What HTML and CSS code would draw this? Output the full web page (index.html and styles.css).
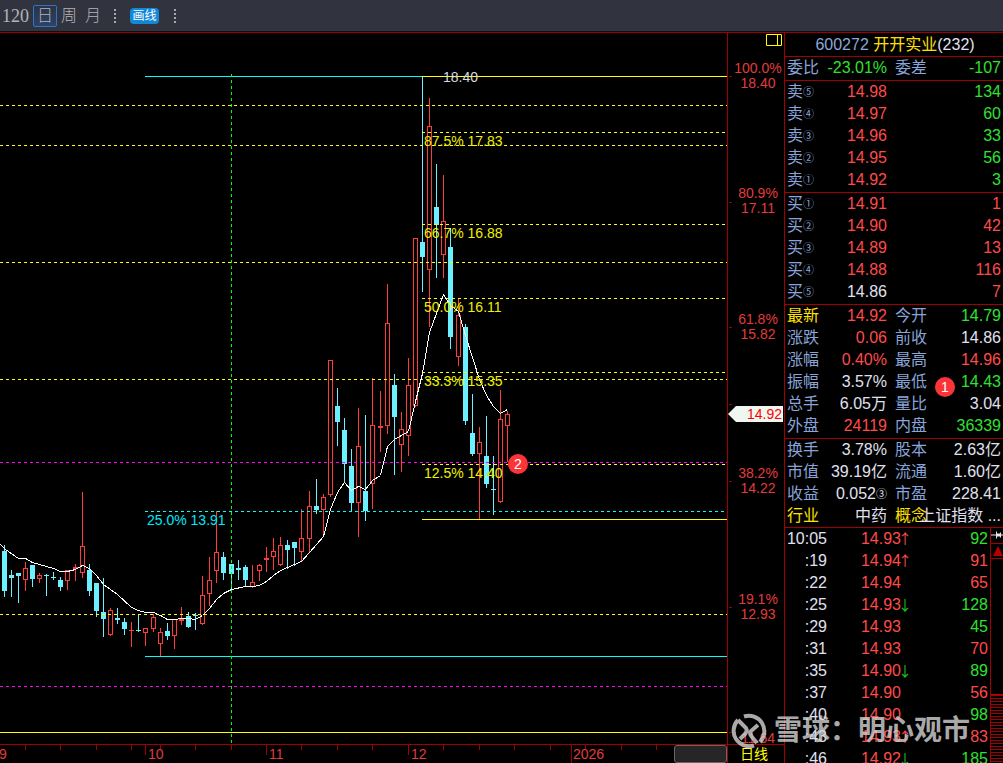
FILE: index.html
```html
<!DOCTYPE html>
<html lang="zh-CN">
<head>
<meta charset="utf-8">
<title>开开实业 600272</title>
<link rel="stylesheet" href="styles.css">
</head>
<body>
<header class="toolbar">
  <button class="period period-num">120</button>
  <button class="period active">日</button>
  <button class="period">周</button>
  <button class="period">月</button>
  <span class="grip"></span>
  <button class="draw">画线</button>
  <span class="grip"></span>
</header>
<main class="workspace">
  <section class="chart">
    <svg class="plot" id="plot" aria-label="日线图">
      <g class="crisp" transform="translate(0.5 0.5)">
        <g id="candles"></g>
        <g class="yellow dashed">
          <line x1="-1" y1="73" x2="100%" y2="73"/>
          <line x1="-1" y1="113" x2="100%" y2="113"/>
          <line x1="-1" y1="230" x2="100%" y2="230"/>
          <line x1="-1" y1="347" x2="100%" y2="347"/>
          <line x1="-1" y1="582" x2="100%" y2="582"/>
          <line x1="421" y1="100" x2="100%" y2="100"/>
          <line x1="421" y1="192" x2="100%" y2="192"/>
          <line x1="421" y1="266" x2="100%" y2="266"/>
          <line x1="421" y1="340" x2="100%" y2="340"/>
          <line x1="421" y1="432" x2="100%" y2="432"/>
        </g>
        <g class="magenta dashed">
          <line x1="-1" y1="430" x2="100%" y2="430"/>
          <line x1="-1" y1="654" x2="100%" y2="654"/>
        </g>
        <g class="cyan">
          <line class="dashed" x1="144" y1="479" x2="100%" y2="479"/>
          <line x1="144" y1="44" x2="422" y2="44"/>
          <line x1="144" y1="624" x2="100%" y2="624"/>
        </g>
        <g class="yellow">
          <line x1="421" y1="44" x2="100%" y2="44"/>
          <line x1="421" y1="487" x2="100%" y2="487"/>
          <line x1="-1" y1="700" x2="100%" y2="700"/>
        </g>
        <line class="green dashed" x1="231" y1="41" x2="231" y2="711"/>
        <polyline class="average" id="average"/>
      </g>
      <g class="fib">
        <text x="424" y="114">87.5% 17.83</text>
        <text x="424" y="206">66.7% 16.88</text>
        <text x="424" y="280">50.0% 16.11</text>
        <text x="424" y="354">33.3% 15.35</text>
        <text x="424" y="446">12.5% 14.40</text>
      </g>
      <text class="fib-cyan" x="147" y="493">25.0% 13.91</text>
      <text class="peak" x="443" y="50">18.40</text>
      <circle class="badge-dot" cx="518" cy="432" r="10"/>
      <text class="badge-num" x="518" y="437">2</text>
    </svg>
    <div class="timeline">
      <svg class="ticks" aria-label="时间轴">
        <g class="crisp" id="ticks" transform="translate(0.5 0)"></g>
        <g class="axis-text">
          <text x="-1" y="14">9</text>
          <text x="148" y="14">10</text>
          <text x="269" y="14">11</text>
          <text x="411" y="14">12</text>
          <text x="573" y="14">2026</text>
        </g>
      </svg>
      <span class="thumb"></span>
    </div>
  </section>
  <section class="scale">
    <svg class="scale-plot" aria-label="价格轴">
      <g class="crisp red-line" transform="translate(0.5 0.5)">
        <line x1="0" y1="44" x2="3" y2="44"/>
        <line x1="0" y1="170" x2="3" y2="170"/>
        <line x1="0" y1="295" x2="3" y2="295"/>
        <line x1="0" y1="372" x2="3" y2="372"/>
        <line x1="0" y1="449" x2="3" y2="449"/>
        <line x1="0" y1="575" x2="3" y2="575"/>
        <line x1="0" y1="700" x2="3" y2="700"/>
      </g>
      <path class="layout-icon" d="M38.500 2.500h15v11h-15zM49.500 2.500v11"/>
      <g class="axis-text mid">
        <text x="30" y="41">100.0%</text><text x="30" y="56">18.40</text>
        <text x="30" y="166">80.9%</text><text x="30" y="181">17.11</text>
        <text x="30" y="292">61.8%</text><text x="30" y="307">15.82</text>
        <text x="30" y="446">38.2%</text><text x="30" y="461">14.22</text>
        <text x="30" y="572">19.1%</text><text x="30" y="587">12.93</text>
        <text x="30" y="711">11.64</text>
      </g>
      <path class="tag" d="M0 382L8 374H55V390H8z"/>
      <text class="tag-text" x="54" y="387">14.92</text>
    </svg>
    <div class="mode">日线</div>
  </section>
  <aside class="panel">
    <h1 class="title"><span class="code">600272</span> <span class="name">开开实业</span>(232)</h1>
    <table class="quotes">
      <tr><th>委比</th><td class="dn">-23.01%</td><th>委差</th><td class="dn">-107</td></tr>
    </table>
    <table class="quotes book">
      <tr><th>卖<i>⑤</i></th><td class="up">14.98</td><th></th><td class="dn">134</td></tr>
      <tr><th>卖<i>④</i></th><td class="up">14.97</td><th></th><td class="dn">60</td></tr>
      <tr><th>卖<i>③</i></th><td class="up">14.96</td><th></th><td class="dn">33</td></tr>
      <tr><th>卖<i>②</i></th><td class="up">14.95</td><th></th><td class="dn">56</td></tr>
      <tr><th>卖<i>①</i></th><td class="up">14.92</td><th></th><td class="dn">3</td></tr>
    </table>
    <table class="quotes book">
      <tr><th>买<i>①</i></th><td class="up">14.91</td><th></th><td class="up">1</td></tr>
      <tr><th>买<i>②</i></th><td class="up">14.90</td><th></th><td class="up">42</td></tr>
      <tr><th>买<i>③</i></th><td class="up">14.89</td><th></th><td class="up">13</td></tr>
      <tr><th>买<i>④</i></th><td class="up">14.88</td><th></th><td class="up">116</td></tr>
      <tr><th>买<i>⑤</i></th><td>14.86</td><th></th><td class="up">7</td></tr>
    </table>
    <table class="quotes book">
      <tr><th class="hot">最新</th><td class="up">14.92</td><th>今开</th><td class="dn">14.79</td></tr>
      <tr><th>涨跌</th><td class="up">0.06</td><th>前收</th><td>14.86</td></tr>
      <tr><th>涨幅</th><td class="up">0.40%</td><th>最高</th><td class="up">14.96</td></tr>
      <tr><th>振幅</th><td>3.57%</td><th class="marked">最低<b class="mark">1</b></th><td class="dn">14.43</td></tr>
      <tr><th>总手</th><td>6.05万</td><th>量比</th><td>3.04</td></tr>
      <tr><th>外盘</th><td class="up">24119</td><th>内盘</th><td class="dn">36339</td></tr>
    </table>
    <table class="quotes">
      <tr><th>换手</th><td>3.78%</td><th>股本</th><td>2.63亿</td></tr>
      <tr><th>市值</th><td>39.19亿</td><th>流通</th><td>1.60亿</td></tr>
      <tr><th>收益</th><td>0.052<i>③</i></td><th>市盈</th><td>228.41</td></tr>
      <tr><th class="hot">行业</th><td>中药</td><th class="hot">概念</th><td><div class="spill">上证指数 ...</div></td></tr>
    </table>
    <div class="trades">
      <div class="trades-view">
        <table class="ticker">
          <tr><td>10:05</td><td class="up">14.93<s class="u">↑</s></td><td class="dn">92</td></tr>
          <tr><td>:19</td><td class="up">14.94<s class="u">↑</s></td><td class="up">91</td></tr>
          <tr><td>:22</td><td class="up">14.94<s></s></td><td class="up">65</td></tr>
          <tr><td>:25</td><td class="up">14.93<s class="d">↓</s></td><td class="dn">128</td></tr>
          <tr><td>:29</td><td class="up">14.93<s></s></td><td class="dn">45</td></tr>
          <tr><td>:31</td><td class="up">14.93<s></s></td><td class="up">70</td></tr>
          <tr><td>:35</td><td class="up">14.90<s class="d">↓</s></td><td class="dn">89</td></tr>
          <tr><td>:37</td><td class="up">14.90<s></s></td><td class="up">56</td></tr>
          <tr><td>:40</td><td class="up">14.90<s></s></td><td class="dn">98</td></tr>
          <tr><td>:43</td><td class="up">14.93<s class="u">↑</s></td><td class="up">83</td></tr>
          <tr><td>:46</td><td class="up">14.92<s class="d">↓</s></td><td class="dn">185</td></tr>
        </table>
      </div>
      <div class="scrollbar">
        <svg class="pin" viewBox="0 0 12 14"><path d="M0 6h5v1H0zM5 3h1v7H5zM6 5h3v3H6zM9 4h1v5H9zM10 6h2v1h-2z"/></svg>
        <button class="scroll-up" aria-label="向上滚动"><svg viewBox="0 0 12 14" width="12" height="14"><path d="M7 2l5 10H2z"/></svg></button>
        <div class="scroll-thumb"></div>
      </div>
    </div>
  </aside>
  <div class="watermark">
    <svg viewBox="0 0 36 36" width="36" height="36">
      <path d="M13 3.500A15.500 15.500 0 0 1 29 29M23 32.500A15.500 15.500 0 0 1 7 7"/>
      <path d="M7 7L15 15Q17 18 14 21L9 26M27 12L20 18Q18 21 21 24L26 30"/>
    </svg>
    <span>雪球：明心观市</span>
  </div>
</main>
<script src="chart.js"></script>
</body>
</html>
```
FILE: styles.css
```css
* { box-sizing: border-box; }
body {
  margin: 0;
  height: 100vh;
  display: flex;
  flex-direction: column;
  overflow: hidden;
  background: #000;
  color: #e0e0f0;
  font-family: "Liberation Sans", "Noto Sans CJK SC", sans-serif;
  font-size: 16px;
}
button {
  margin: 0;
  padding: 0;
  border: 0;
  background: none;
  color: inherit;
  font: inherit;
}
.toolbar {
  flex: none;
  display: flex;
  align-items: center;
  height: 32px;
  padding-left: 2px;
  background: #31343f;
  border-bottom: 1px solid #101014;
  color: #b4b4b8;
}
.period {
  width: 24px;
  height: 22px;
  line-height: 20px;
  font-family: "Liberation Serif", "Noto Sans CJK SC", serif;
  font-weight: 300;
}
.period-num { width: 31px; font-size: 18px; text-align: left; }
.active {
  border: 1px solid #2f74c8;
  border-radius: 2px;
  background: linear-gradient(#2b3345, #2c4368);
}
.grip {
  width: 2px;
  height: 14px;
  margin: 0 14px 0 9px;
  background: repeating-linear-gradient(#a8a8ac 0 2px, transparent 2px 4px);
}
.draw {
  width: 29px;
  height: 16px;
  border-radius: 4px;
  background: #1488d8;
  color: #fff;
  font-size: 12px;
  line-height: 16px;
}
.draw + .grip { margin-left: 15px; }

.workspace {
  position: relative;
  flex: 1;
  display: flex;
  min-height: 0;
  border-top: 1px solid #a00000;
}
.chart { flex: 1; min-width: 0; display: flex; flex-direction: column; }
.plot { display: block; flex: 1; width: 100%; min-height: 0; margin-top: -1px; }
.crisp { shape-rendering: crispEdges; fill: none; }
.dashed { stroke-dasharray: 3 3; }
.yellow { stroke: #ff0; }
.magenta { stroke: #f0f; }
.cyan { stroke: #0ff; }
.green { stroke: #0f0; }
.average { stroke: #fff; }
.rise { stroke: #ff3c3c; fill: none; }
.fall { stroke: #6cf0ff; fill: #6cf0ff; }
.plot text { font-size: 14px; }
.fib { fill: #f0f000; }
.fib-cyan { fill: #00e8f8; }
.peak { fill: #d8d8e4; }
.badge-num { fill: #fff; text-anchor: middle; }
.badge-dot { fill: #fc3438; }
.timeline {
  position: relative;
  flex: none;
  height: 19px;
  border-top: 1px solid #a00000;
}
.ticks { display: block; width: 100%; height: 18px; }
.ticks line, .red-line { stroke: #a00000; }
.axis-text { fill: #e03c3c; font-size: 14px; }
.mid { text-anchor: middle; }
.thumb {
  position: absolute;
  right: 0;
  top: 0;
  width: 53px;
  height: 18px;
  border: 1px solid #666;
  border-radius: 3px;
  background: #262626;
}
.scale {
  flex: none;
  width: 57px;
  display: flex;
  flex-direction: column;
  border-left: 1px solid #a00000;
}
.scale-plot { display: block; flex: 1; width: 100%; min-height: 0; margin-top: -1px; }
.layout-icon { fill: none; stroke: #ff0; }
.tag { fill: #f0f6f0; }
.tag-text { fill: #f00; font-size: 14px; text-anchor: end; }
.mode {
  flex: none;
  height: 19px;
  padding-left: 12px;
  border-top: 1px solid #a00000;
  color: #ff0;
  font-size: 14px;
  line-height: 18px;
}

.panel {
  flex: none;
  width: 219px;
  display: flex;
  flex-direction: column;
  border-left: 1px solid #a00000;
}
.title {
  flex: none;
  height: 24px;
  margin: 0;
  padding-left: 2px;
  border-bottom: 1px solid #a00000;
  font-size: 16px;
  font-weight: 400;
  line-height: 23px;
  text-align: center;
}
.code { color: #8aa8dc; }
.name, .quotes .hot { color: #ffe000; }
.quotes {
  flex: none;
  display: block;
  border-spacing: 0;
  border-bottom: 1px solid #a00000;
  padding: 0 2px;
}
.quotes tbody { display: block; }
.quotes tr {
  display: grid;
  grid-template-columns: 36px 64px 40px minmax(0, 1fr);
  height: 22px;
  line-height: 22px;
  white-space: nowrap;
}
.title + .quotes, .book { padding-bottom: 1px; }
th, td { padding: 0; font-weight: 400; }
th { color: #88a4d8; text-align: left; }
td { text-align: right; }
th + td + th { padding-left: 8px; }
.quotes i { font-size: 11px; font-style: normal; vertical-align: 1px; line-height: 1; }
.up { color: #ff4a4a; }
.dn { color: #30e030; }
.spill { display: flex; justify-content: flex-end; white-space: pre; }
.marked { position: relative; }
.mark {
  position: absolute;
  left: 48px;
  top: 6px;
  width: 20px;
  height: 20px;
  border-radius: 50%;
  background: #fc3438;
  color: #fff;
  font-size: 14px;
  font-weight: 400;
  line-height: 20px;
  text-align: center;
}
.trades { flex: 1; min-height: 0; display: flex; }
.trades-view { flex: 1; overflow: hidden; }
.ticker { width: 100%; border-spacing: 0; table-layout: fixed; }
.ticker td { height: 22px; line-height: 22px; white-space: nowrap; }
.ticker td:first-child { width: 42px; }
.ticker td:last-child { padding-right: 2px; }
.ticker td:nth-child(2) { width: 82px; }
.ticker s {
  display: inline-flex;
  justify-content: center;
  width: 8px;
  font-family: "Noto Sans CJK SC", sans-serif;
  font-size: 14px;
  line-height: 1;
  text-decoration: none;
}
.u { color: #ff4a4a; }
.d { color: #20c020; }
.scrollbar {
  flex: none;
  width: 13px;
  display: flex;
  flex-direction: column;
  border-left: 1px solid #a00000;
}
.pin { flex: none; width: 12px; height: 15px; fill: #e8e8e8; }
.scroll-up {
  flex: none;
  height: 16px;
  border: solid #a00000;
  border-width: 1px 0;
}
.scroll-up svg { display: block; fill: #b00000; }
.scroll-thumb {
  margin-top: auto;
  height: 69px;
  background: repeating-linear-gradient(#a00000 0 1px, #000 1px 3px);
  border-top: 1px solid #c00000;
}
.watermark {
  position: absolute;
  right: 33px;
  bottom: 14px;
  display: flex;
  align-items: center;
  gap: 7px;
  color: #d4d4d4;
  opacity: .8;
  font-size: 28px;
  font-weight: 700;
  line-height: 36px;
}
.watermark svg { fill: none; stroke: #d4d4d4; stroke-width: 4; }
```
FILE: chart.js
```js
const SVG = "http://www.w3.org/2000/svg";

// Plot rows: kind, x, high, low, body top, body bottom. TOP is the plot's first row.
const TOP = 32;
const candles = `
c 4 544 595 551 590
c 11 569 595 575 577
c 18 572 601 573 575
r 25 561 589 568 579
c 32 564 585 565 578
r 39 572 581 575 578
c 46 573 594 575 575
c 53 571 578 577 577
c 60 576 589 580 586
r 67 570 588 570 580
r 75 563 579 567 568
r 82 491 576 546 572
c 89 563 594 570 590
c 96 582 615 583 610
c 103 577 635 612 618
r 110 607 634 610 634
c 117 607 622 618 619
c 124 617 633 622 628
r 131 621 645 630 630
c 138 613 630 630 630
r 145 627 644 628 632
r 153 613 630 617 628
r 160 627 655 632 643
c 167 622 638 631 635
r 174 619 647 619 635
r 181 606 623 619 620
c 188 611 626 616 626
c 195 612 628 615 615
r 202 575 623 595 623
r 209 556 604 580 593
r 216 510 581 552 570
c 223 551 578 557 572
c 231 564 589 564 573
c 238 559 578 568 569
c 245 564 584 567 579
r 252 564 586 582 586
r 259 563 579 565 570
r 266 546 570 558 559
r 273 537 568 551 556
r 280 536 564 545 564
c 287 539 567 545 549
c 294 542 564 542 547
r 301 508 560 538 551
r 309 490 550 506 538
c 316 478 512 506 509
r 323 493 535 497 509
r 330 360 495 360 494
c 337 387 444 406 421
c 344 417 481 430 463
c 351 448 509 466 502
r 358 407 535 446 502
c 365 414 519 491 510
r 372 377 507 425 483
r 380 390 450 426 427
r 387 283 432 323 425
c 394 373 473 385 416
r 401 411 470 429 444
r 408 357 454 385 435
r 415 238 405 238 405
c 422 76 290 242 256
r 429 97 325 126 269
c 436 163 276 207 224
r 443 174 276 221 254
c 450 227 347 247 336
r 458 298 364 315 356
c 465 323 423 327 420
c 472 393 454 433 453
r 479 426 518 442 453
c 486 415 486 456 483
c 493 455 513 489 489
r 500 389 501 419 501
r 507 410 460 414 425`;

const average = `0,544 5,549 18,558 25,558 32,562 46,566 53,568 60,571 67,571 75,569
82,565 89,568 96,575 103,584 117,594 131,607 138,610 145,612 153,612 160,615 167,619
174,619 181,618 188,618 195,619 202,615 209,608 216,599 223,593 231,589 245,586
252,586 259,585 266,581 273,575 280,570 287,567 294,564 301,561 309,552 316,544
323,536 330,509 337,492 344,482 351,490 358,486 365,489 372,480 380,475 387,446
394,439 401,435 408,431 415,401 422,373 429,332 436,313 443,294 450,305 458,311
465,335 472,357 479,379 486,395 493,406 500,413 507,409`;

function add(parent, name, attrs) {
  const el = document.createElementNS(SVG, name);
  for (const key in attrs) el.setAttribute(key, attrs[key]);
  parent.appendChild(el);
}

const layer = document.getElementById("candles");
for (const row of candles.trim().split("\n")) {
  const [kind, ...nums] = row.split(" ");
  const [x, high, low, top, bottom] = nums.map((n, i) => (i ? n - TOP : +n));
  const cls = kind === "r" ? "rise" : "fall";
  const wick = `M${x} ${high}V${top}M${x} ${bottom}V${low + 1}`;
  add(layer, "path", { class: cls, d: wick });
  if (top === bottom) add(layer, "path", { class: cls, d: `M${x - 3} ${top}h5` });
  else add(layer, "rect", { class: cls, x: x - 2, y: top, width: 4, height: bottom - top });
}

document.getElementById("average").setAttribute(
  "points",
  average.split(/\s+/).map((p) => {
    const [x, y] = p.split(",");
    return `${x},${y - TOP}`;
  }).join(" ")
);

const ticks = document.getElementById("ticks");
const long = { 145: 10, 266: 10, 408: 10, 571: 18 };
for (const x of [25, 60, 96, 131, 145, 160, 195, 231, 266, 301, 337, 372, 408, 443, 479, 514, 550, 571, 585, 621, 656, 692]) {
  add(ticks, "line", { x1: x, y1: 0, x2: x, y2: long[x] || 5 });
}
```
